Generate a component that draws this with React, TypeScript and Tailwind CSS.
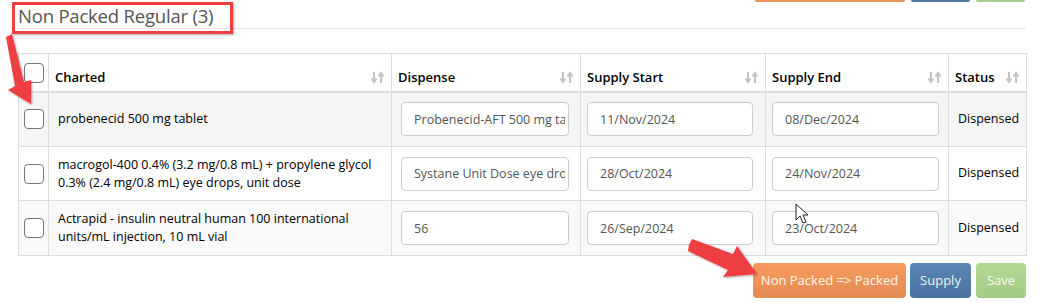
import React from 'react';

interface Row {
  charted: string[];
  dispense: string;
  start: string;
  end: string;
  status: string;
  bg: string;
  h: string;
}

const rows: Row[] = [
  { charted: ['probenecid 500 mg tablet'], dispense: 'Probenecid-AFT 500 mg tablet', start: '11/Nov/2024', end: '08/Dec/2024', status: 'Dispensed', bg: 'bg-[#f5f5f5]', h: 'h-[55px]' },
  { charted: ['macrogol-400 0.4% (3.2 mg/0.8 mL) + propylene glycol', '0.3% (2.4 mg/0.8 mL) eye drops, unit dose'], dispense: 'Systane Unit Dose eye drops', start: '28/Oct/2024', end: '24/Nov/2024', status: 'Dispensed', bg: 'bg-white', h: 'h-[54px]' },
  { charted: ['Actrapid - insulin neutral human 100 international', 'units/mL injection, 10 mL vial'], dispense: '56', start: '26/Sep/2024', end: '23/Oct/2024', status: 'Dispensed', bg: 'bg-[#f9f9f9]', h: 'h-[55px]' },
];

const SortIcon = () => (
  <svg width="14" height="13" viewBox="0 0 14 13" className="shrink-0">
    <path d="M3 1v9M0.5 7.5L3 11l2.5-3.5" stroke="#c4c4c4" strokeWidth="2" fill="none" />
    <path d="M10 12V3M7.5 5.5L10 2l2.5 3.5" stroke="#c4c4c4" strokeWidth="2" fill="none" />
  </svg>
);

const Checkbox = () => (
  <div className="w-[20px] h-[20px] rounded-[4px] border-[1.5px] border-[#777] bg-white" />
);

const Th = ({ label, width }: { label: string; width: string }) => (
  <th className={`${width} border border-[#dddddd] border-b-2 align-bottom px-[6px] pb-[3px] text-left`}>
    <div className="flex items-center justify-between">
      <span className="font-semibold text-[13px] text-black">{label}</span>
      <SortIcon />
    </div>
  </th>
);

const Field = ({ value }: { value: string }) => (
  <input
    readOnly
    value={value}
    className="block w-full h-[34px] rounded-[4px] border border-[#cccccc] bg-white pl-[12px] pr-[3px] text-[12.5px] text-[#555] outline-none"
  />
);

export default function App() {
  return (
    <div className="relative w-[1040px] h-[303px] bg-white overflow-hidden" style={{ fontFamily: '"Open Sans", "Noto Sans", sans-serif' }}>
      {/* bottoms of the buttons above */}
      <div className="flex h-[2px] pl-[755px] gap-[6px]">
        <div className="w-[150px] bg-[#e98f57] rounded-b-[3px]" />
        <div className="w-[59px] bg-[#4f79a5] rounded-b-[3px]" />
        <div className="w-[49px] bg-[#a8cf89] rounded-b-[3px]" />
      </div>

      <div className="pl-[18px] pr-[14px]">
        <div className="h-[27px] border-b border-[#e5e5e5] flex items-end">
          <h3 className="text-[18.5px] leading-[24px] text-[#555] tracking-[-0.2px]">Non Packed Regular (3)</h3>
        </div>

        <table className="mt-[24px] w-[1008px] border-collapse table-fixed">
          <thead>
            <tr className="h-[38px]">
              <th className="w-[30px] border border-[#dddddd] border-b-2 align-top pt-[9px] pl-[5px]">
                <Checkbox />
              </th>
              <Th label="Charted" width="w-[343px]" />
              <Th label="Dispense" width="w-[189px]" />
              <Th label="Supply Start" width="w-[185px]" />
              <Th label="Supply End" width="w-[183px]" />
              <Th label="Status" width="w-[78px]" />
            </tr>
          </thead>
          <tbody>
            {rows.map((r, i) => (
              <tr key={i} className={`${r.h} ${r.bg}`}>
                <td className="border border-[#dddddd] pl-[5px] align-middle">
                  <Checkbox />
                </td>
                <td className="border border-[#dddddd] px-[9px] text-[12.5px] leading-[18px] text-black">
                  {r.charted.map((l, j) => (
                    <div key={j}>{l}</div>
                  ))}
                </td>
                <td className="border border-[#dddddd] pl-[9px] pr-[11px]">
                  <Field value={r.dispense} />
                </td>
                <td className="border border-[#dddddd] pl-[6px] pr-[12px]">
                  <Field value={r.start} />
                </td>
                <td className="border border-[#dddddd] pl-[6px] pr-[9px]">
                  <Field value={r.end} />
                </td>
                <td className="border border-[#dddddd] pl-[9px] text-[12.5px] text-black">{r.status}</td>
              </tr>
            ))}
          </tbody>
        </table>

        <div className="flex justify-end gap-[4px] mt-[7px]">
          <button className="h-[35px] w-[153px] rounded-[4px] bg-gradient-to-b from-[#f89c5e] to-[#e38b55] text-white/90 text-[13px]">
            Non Packed =&gt; Packed
          </button>
          <button className="h-[35px] w-[61px] rounded-[4px] bg-gradient-to-b from-[#5b87b4] to-[#4a72a0] text-white/90 text-[13px]">
            Supply
          </button>
          <button className="h-[35px] w-[50px] ml-[1px] rounded-[4px] bg-gradient-to-b from-[#b3d894] to-[#a2cb83] text-white/90 text-[13px]">
            Save
          </button>
        </div>
      </div>

      {/* annotations */}
      <div className="absolute left-[12px] top-[2px] w-[221px] h-[32px] border-[3px] border-[#ee3f42] shadow-[1px_1px_2px_rgba(0,0,0,0.35)]" />

      <svg className="absolute left-0 top-0" width="1040" height="303" viewBox="0 0 1040 303">
        <defs>
          <filter id="sh" x="-20%" y="-20%" width="140%" height="140%">
            <feDropShadow dx="1" dy="1" stdDeviation="1" floodColor="#000" floodOpacity="0.35" />
          </filter>
        </defs>
        <g filter="url(#sh)" fill="#ee3f42">
          <path d="M6 37 L12 34 L24 82 L31 80 L31 104 L8 90 L15 86 Z" strokeLinejoin="round" />
          <path d="M689 245 L692 239 L733 254 L737 246 L757 274 L723 277 L728 270 L688 251 Z" strokeLinejoin="round" />
        </g>
        {/* mouse pointer */}
        <path d="M796 204 L796 220 L800 216 L803 223 L806 222 L803 215 L808 215 Z" fill="#fff" stroke="#222" strokeWidth="1" />
      </svg>
    </div>
  );
}
